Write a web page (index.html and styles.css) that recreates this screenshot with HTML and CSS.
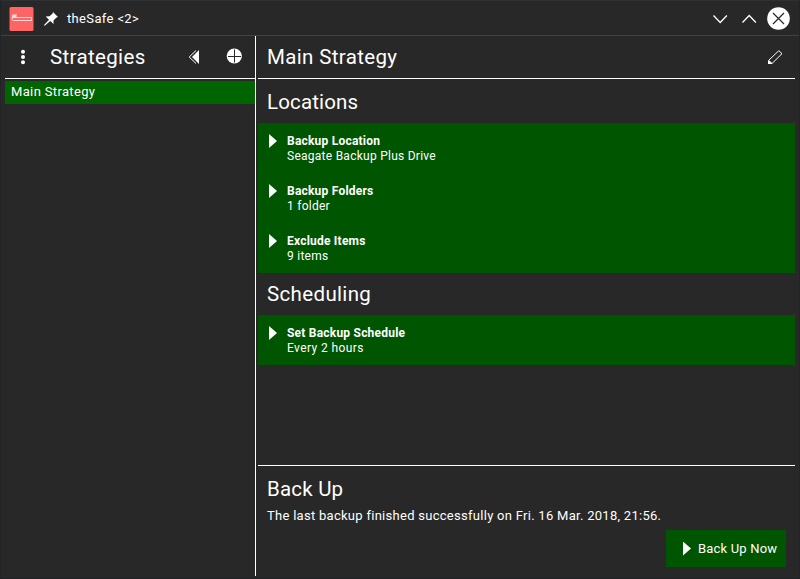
FILE: index.html
```html
<!DOCTYPE html>
<html lang="en">
<head>
<meta charset="utf-8">
<title>theSafe</title>
<link rel="stylesheet" href="styles.css">
</head>
<body>
<div class="window">
  <header class="titlebar">
    <svg class="app-icon" width="25" height="24" viewBox="0 0 25 24"><rect x=".5" width="24" height="24" rx="1.500" fill="#ff6464"/><path d="M3 10.500h19.500v3H4.500l-1.500-1z" fill="none" stroke="#ffdcdc"/><path d="M3 10V8l2-1 1 1 1.500-1.500V10z" fill="#ffdcdc"/></svg>
    <svg class="pin" width="14" height="14" viewBox="0 0 14 14"><path d="M9 0l5 5-1.500.4-3 3L9.500 12 6.300 9 1 13.500 0 13.700.3 12.700 5 7.700 1.700 4.500 5.600 4.300 8.600 1.500z" fill="#fff"/></svg>
    <span class="window-title">theSafe &lt;2&gt;</span>
    <svg class="controls" width="78" height="24" viewBox="0 0 78 24"><path d="M1.500 8.500l6.700 7 6.700-7M30.500 15.500l6.700-7 6.700 7" fill="none" stroke="#fff" stroke-width="1.300"/><circle cx="66.500" cy="11.500" r="11.300" fill="#fff"/><path d="M61 6l11 11M72 6l-11 11" stroke="#282828" stroke-width="1.200"/></svg>
  </header>
  <main class="content">
    <aside class="sidebar">
      <div class="bar side-bar">
        <svg class="menu" width="6" height="16" viewBox="0 0 6 16"><g fill="#fff"><circle cx="3" cy="2.800" r="2"/><circle cx="3" cy="8" r="2"/><circle cx="3" cy="13.200" r="2"/></g></svg>
        <h1 class="strategies">Strategies</h1>
        <svg class="collapse" width="12" height="14" viewBox="0 0 12 14"><path d="M11 0v14L4 7z" fill="#fff"/><path d="M8 .5L1.200 7 8 13.500" fill="none" stroke="#fff"/></svg>
        <svg class="add" width="16" height="16" viewBox="0 0 16 16"><circle cx="8.300" cy="8" r="7.600" fill="#fff"/><path d="M8.500 1.500v13M2 8.500h13" stroke="#282828"/></svg>
      </div>
      <div class="selected">Main Strategy</div>
    </aside>
    <section class="detail">
      <div class="bar detail-bar">
        <h1 class="main-title">Main Strategy</h1>
        <svg class="edit" width="15" height="15" viewBox="0 0 15 15"><path d="M.5 10.500L10.800.7 14 3.700 4 13.500" fill="none" stroke="#fff"/><path d="M0 10.500h1.500L4 13v1H0z" fill="#fff"/></svg>
      </div>
      <h2 class="locations">Locations</h2>
      <div class="card">
        <div class="row"><i class="arrow"></i><div><b>Backup Location</b><p>Seagate Backup Plus Drive</p></div></div>
        <div class="row"><i class="arrow"></i><div><b>Backup Folders</b><p>1 folder</p></div></div>
        <div class="row"><i class="arrow"></i><div><b>Exclude Items</b><p>9 items</p></div></div>
      </div>
      <h2 class="scheduling">Scheduling</h2>
      <div class="card">
        <div class="row"><i class="arrow"></i><div><b>Set Backup Schedule</b><p class="interval">Every 2 hours</p></div></div>
      </div>
      <footer class="backup">
        <h2 class="back-up">Back Up</h2>
        <p class="status">The last backup finished successfully on Fri. 16 Mar. 2018, 21:56.</p>
        <button class="run"><i class="arrow"></i><span>Back Up Now</span></button>
      </footer>
    </section>
  </main>
</div>
</body>
</html>
```
FILE: styles.css
```css
* { box-sizing: border-box; }
body { margin: 0; background: #26282b; color: #fff; font: 13px/16px Roboto, "Liberation Sans", sans-serif; }
h1, h2, p { margin: 0; font-weight: 400; }
h1, h2 { font-size: 20.5px; line-height: 42px; white-space: nowrap; }
svg { display: block; flex: none; }
span, b, p { white-space: nowrap; }
.window { width: 800px; height: 579px; background: #282828; display: flex; flex-direction: column; border: 1px solid #222326; border-top-color: #2d3134; border-radius: 4px 4px 0 0; }
.titlebar { height: 35px; border-bottom: 1px solid #134c86; display: flex; align-items: center; padding: 2px 9px 0 8px; }
.pin { margin-left: 10px; }
.window-title { margin-left: 9px; letter-spacing: .35px; }
.controls { margin-left: auto; }
.content { flex: 1; display: flex; padding: 0 4px 2px; }
.sidebar { width: 251px; border-right: 1px solid #fff; }
.bar { height: 43px; border-bottom: 1px solid #fff; display: flex; align-items: center; }
.menu { margin-left: 15px; }
.strategies { margin-left: 24px; width: 138px; letter-spacing: .35px; }
.add { margin: -2px 0 0 26px; }
.selected { margin-top: 2px; height: 23px; line-height: 21px; padding-left: 6px; background: #006400; letter-spacing: .35px; }
.detail { flex: 1; margin-left: 2px; display: flex; flex-direction: column; }
.detail-bar { padding-left: 9px; }
.edit { margin: 0 12px 0 auto; }
.detail > h2 { padding-left: 9px; line-height: 46px; height: 44px; }
.detail > .scheduling { height: 42px; line-height: 42px; }
.main-title { letter-spacing: .35px; }
.locations { letter-spacing: .15px; }
.scheduling { letter-spacing: .35px; }
.back-up { letter-spacing: .2px; }
.card { background: #005500; }
.row { height: 50px; padding: 11px 0 0 11px; display: flex; font-size: 12px; line-height: 15px; }
.row > div { margin-left: 10px; }
.row b { display: block; font-weight: 700; letter-spacing: .22px; }
.row p { letter-spacing: .26px; }
.row .interval { letter-spacing: .4px; }
.arrow { width: 8px; height: 14px; background: #fff; clip-path: polygon(0 0, 100% 50%, 0 100%); flex: none; }
.backup { margin-top: auto; height: 111px; border-top: 1px solid #fff; padding: 2px 9px 0; display: flex; flex-direction: column; }
.status { margin-top: -2px; letter-spacing: .28px; }
.run { align-self: flex-end; width: 120px; height: 37px; margin-top: 6px; border: 0; padding: 0 0 0 17px; background: #005500; color: #fff; font: inherit; display: flex; align-items: center; }
.run span { margin-left: 7px; letter-spacing: .18px; }
```
